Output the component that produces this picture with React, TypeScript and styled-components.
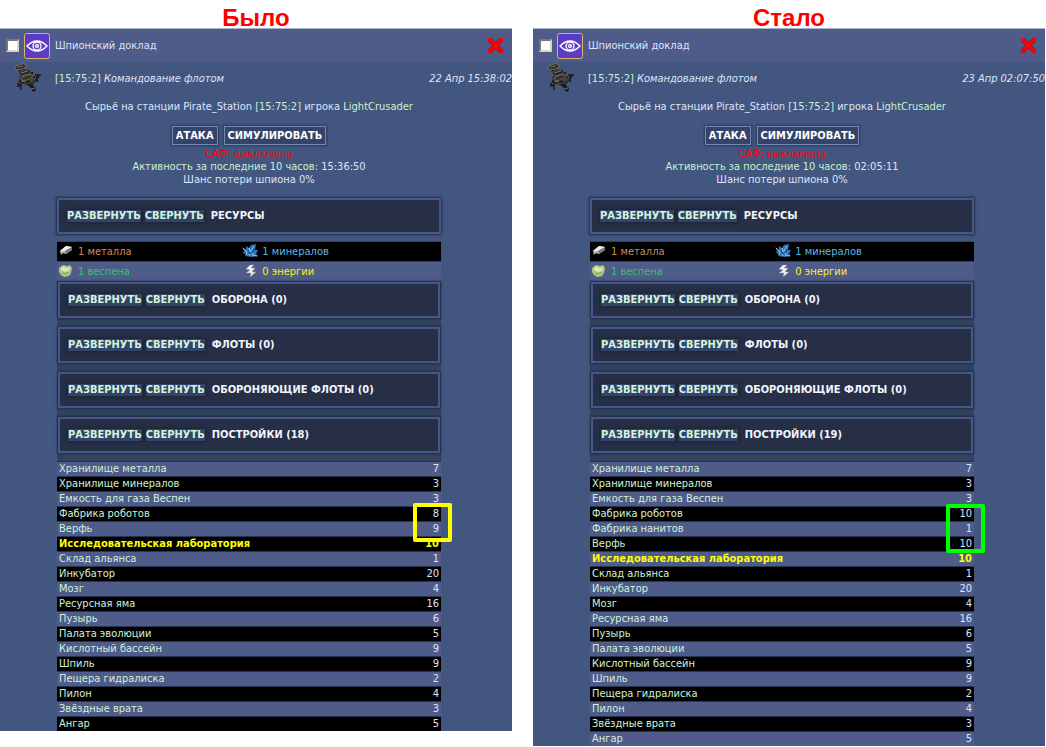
import React from "react";
import styled, { createGlobalStyle, css } from "styled-components";

const GlobalStyle = createGlobalStyle`
  *, *::before, *::after { box-sizing: border-box; }
  body { margin: 0; background: #fff; }
`;

const Page = styled.main`
  display: grid;
  grid-template-columns: 1fr 1fr;
  column-gap: 21px;
  align-items: start;
  padding-right: 1px;
  color: #dde4fb;
  font: 11px/13px "DejaVu Sans Condensed", "DejaVu Sans", sans-serif;
`;

const Column = styled.section`
  min-width: 0;
`;

const Title = styled.h1`
  height: 28px;
  margin: 0;
  padding-top: 4px;
  text-align: center;
  color: #f00;
  font: bold 24px/28px "Liberation Sans", Arial, sans-serif;
`;

const Panel = styled.article`
  background: #43567f;
  border-top: 1px solid #a9b4cc;
`;

const Header = styled.header`
  display: flex;
  align-items: center;
  height: 33px;
  padding: 0 7px 0 6px;
  background: #4f5b88;
`;

const Check = styled.input`
  appearance: none;
  width: 13px;
  height: 13px;
  margin: 0 5px 0 0;
  background: #fff;
  border: 2px solid;
  border-color: #777 #d8d4cc #d8d4cc #777;
`;

const EyeIcon = styled.svg`
  width: 26px;
  height: 26px;
  margin-right: 5px;
`;

const Subject = styled.label`
  flex: 1;
`;

const CloseButton = styled.button`
  width: 19px;
  height: 19px;
  padding: 0;
  border: 0;
  background: none;
  cursor: pointer;
  svg { display: block; }
`;

const Sender = styled.div`
  display: flex;
  align-items: center;
  height: 32px;
  padding-left: 13px;
`;

const ShipIcon = styled.svg`
  width: 30px;
  height: 30px;
  margin-right: 12px;
`;

const Link = styled.a`
  color: #c9f0cf;
  text-decoration: none;
`;

const From = styled.em`
  flex: 1;
  margin-left: 3px;
`;

const Sent = styled.time`
  font-style: italic;
`;

const Content = styled.div`
  padding-right: 14px;
  text-align: center;
`;

const Line = styled.p`
  margin: 0;
`;

const Intro = styled(Line)`
  padding: 6px 0 13px;
`;

const Actions = styled.div`
  display: flex;
  justify-content: center;
  gap: 6px;
  margin-bottom: 2px;
`;

const ActionButton = styled.button`
  height: 19px;
  padding: 0 3px;
  border: 1px solid #7488b4;
  background: #33436a;
  box-shadow: 0 0 2px 1px #2c3a5a;
  color: #fff;
  font: bold 11px/15px "DejaVu Sans Condensed", sans-serif;
  cursor: pointer;
`;

const Status = styled(Line)`
  color: #f00;
`;

const Report = styled.div`
  width: 384px;
  max-width: 100%;
  margin: 12px auto 0;
  text-align: left;
`;

const Group = styled.div`
  display: grid;
  gap: 9px;
  padding: 1px 1px 8px;
  background: #33425f;
`;

const Bar = styled.div`
  display: flex;
  align-items: center;
  height: 36px;
  padding-left: 8px;
  border: 2px solid #43588a;
  background: #262f45;
  box-shadow: 0 0 2px 1px #232d45;
`;

const FirstBar = styled(Bar)`
  margin: 0 0 7px;
`;

const ToggleButton = styled.button`
  height: 12px;
  margin-right: 4px;
  padding: 0;
  border: 0;
  background: #32446a;
  box-shadow: 0 0 3px 1px #1c2438;
  color: #d6f3da;
  font: bold 11px/12px "DejaVu Sans Condensed", sans-serif;
  cursor: pointer;
`;

const BarTitle = styled.h2`
  margin: 0 0 0 3px;
  color: #f2f4ff;
  font: bold 11px/14px "DejaVu Sans Condensed", sans-serif;
`;

const Table = styled.table`
  width: 100%;
  border-collapse: collapse;
`;

const ResourceRow = styled.tr<{ $dark?: boolean }>`
  height: 20px;
  background: ${(p) => (p.$dark ? "#000" : "#4f5b88")};
  box-shadow: inset 0 1px #33425f;
`;

const ResourceCell = styled.td<{ $color: string }>`
  width: 48%;
  padding: 0 0 0 1px;
  color: ${(p) => p.$color};
  & + & { width: 52%; }
`;

const ResourceLabel = styled.span`
  display: flex;
  align-items: center;
  gap: 3px;
  svg { width: 17px; height: 14px; }
`;

const Buildings = styled.div`
  position: relative;
`;

const BuildingRow = styled.tr<{ $hot: boolean }>`
  height: 15px;
  background: #000;
  color: #d2f0da;
  box-shadow: inset 0 1px #28334d;
  &:nth-child(odd) { background: #4f5b88; }
  ${(p) =>
    p.$hot &&
    css`
      &&, && td { color: #ff0; font-weight: bold; }
    `}
`;

const NameCell = styled.td`
  padding: 1px 2px;
`;

const LevelCell = styled.td`
  padding: 1px 2px;
  text-align: right;
  color: #dde4fb;
`;

const Marker = styled.div<{ $color: string; $top: number; $height: number }>`
  position: absolute;
  top: ${(p) => p.$top}px;
  right: -11px;
  width: 39px;
  height: ${(p) => p.$height}px;
  border: 4px solid ${(p) => p.$color};
  border-radius: 2px;
  pointer-events: none;
`;

const Eye = () => (
  <EyeIcon viewBox="0 0 26 26" aria-hidden="true">
    <rect x="0.5" y="0.5" width="25" height="25" rx="2" fill="#5b3cc4" stroke="#d9b56a" />
    <path d="M3 13Q13 3 23 13Q13 23 3 13Z" fill="none" stroke="#fff" strokeWidth="1.4" />
    <circle cx="13" cy="13" r="4" fill="none" stroke="#fff" strokeWidth="1.3" />
    <circle cx="13" cy="13" r="1.8" fill="#c9bff2" stroke="#fff" strokeWidth="0.8" />
  </EyeIcon>
);

const Ship = () => (
  <ShipIcon viewBox="0 0 30 30" aria-hidden="true">
    <path d="M5 6L13 6L15 9L20 9L20 12L27 13L25 16L21 20L18 21L23 25L22 29L19 28L17 23L9 21L6 24L5 20L6 15L8 13L6 10Z" fill="#1d1e20" />
    <ellipse cx="7.500" cy="3.800" rx="5.500" ry="2.600" transform="rotate(-14 7.500 3.800)" fill="#2b2a28" stroke="#706f6a" />
    <ellipse cx="12" cy="9.500" rx="6" ry="2.600" transform="rotate(-15 12 9.500)" fill="#25272a" stroke="#55534c" />
    <ellipse cx="14" cy="16.500" rx="9" ry="4.200" transform="rotate(-18 14 16.500)" fill="#1f2022" stroke="#5a584c" />
    <ellipse cx="14" cy="14.500" rx="6" ry="2.400" transform="rotate(-18 14 14.500)" fill="#34332f" stroke="#85816e" strokeWidth="0.7" />
    <path d="M5 24V20M8 27V21M22 12L28 12M23 16L25 19M15 21L20 26M19 21L21 27" stroke="#1a1a1b" strokeWidth="1.500" />
    <path d="M4 4L10 3M8 10L15 8M8 18L13 19M17 18L21 15M18 26L22 25" stroke="#8d8975" strokeWidth="0.8" />
  </ShipIcon>
);

const Cross = () => (
  <svg width="19" height="19" viewBox="0 0 19 19" aria-hidden="true">
    <path d="M3.500 3.500L15.500 15.500M15.500 3.500L3.500 15.500" stroke="#7a1d3c" strokeWidth="4.600" />
    <path d="M3.500 3.500L15.500 15.500M15.500 3.500L3.500 15.500" stroke="#f00" strokeWidth="3.400" strokeLinecap="round" />
  </svg>
);

const Metal = () => (
  <svg viewBox="0 0 17 14" aria-hidden="true">
    <path d="M2 7L8 2L14 3L14 6L8 10L5 9L3 11Z" fill="#b9b9b9" />
    <path d="M2 7L8 2L14 3L7 7Z" fill="#ededed" />
    <path d="M7 7L14 3L14 6L8 10Z" fill="#777" />
  </svg>
);

const Mineral = () => (
  <svg viewBox="0 0 17 14" aria-hidden="true">
    <path d="M0 3L4 6L4 2L7 4L9 1L14 0L13 6L16 6L14 10L16 12L10 13L3 12L4 10L1 9L2 7Z" fill="#2f74b8" />
    <path d="M1 4L5 8L4 11M7 4L8 8L12 2M12 8L10 11L15 12M7 10L8 12" fill="none" stroke="#8cc6ee" />
    <path d="M6 6L8 10M12 5L11 9" stroke="#153f7c" />
  </svg>
);

const Gas = () => (
  <svg viewBox="0 0 17 14" aria-hidden="true">
    <path d="M1 4L5 1L9 2L12 1L14 4L13 9L11 12L6 13L3 11L1 8Z" fill="#a9c77f" />
    <path d="M3 4L6 2L8 4L12 3L11 7L7 8L3 6Z" fill="#dbe9b4" />
    <path d="M4 9L7 10L11 8" fill="none" stroke="#7fa05c" />
  </svg>
);

const Energy = () => (
  <svg viewBox="0 0 17 14" aria-hidden="true">
    <path d="M8 1L4 5L8 6L4 9L9 9L8 13L14 8L10 8L13 4L9 4L12 1Z" fill="#f3f3ec" stroke="#8d93a8" strokeWidth="0.5" />
  </svg>
);

const Toggles = () => (
  <>
    <ToggleButton type="button">РАЗВЕРНУТЬ</ToggleButton>
    <ToggleButton type="button">СВЕРНУТЬ</ToggleButton>
  </>
);

type Building = [name: string, level: number];

interface ReportData {
  id: string;
  title: string;
  sent: string;
  activity: string;
  marker: { color: string; top: number; height: number };
  buildings: Building[];
}

const reports: ReportData[] = [
  {
    id: "before",
    title: "Было",
    sent: "22 Апр 15:38:02",
    activity: "15:36:50",
    marker: { color: "#ff0", top: 42, height: 39 },
    buildings: [
      ["Хранилище металла", 7],
      ["Хранилище минералов", 3],
      ["Емкость для газа Веспен", 3],
      ["Фабрика роботов", 8],
      ["Верфь", 9],
      ["Исследовательская лаборатория", 10],
      ["Склад альянса", 1],
      ["Инкубатор", 20],
      ["Мозг", 4],
      ["Ресурсная яма", 16],
      ["Пузырь", 6],
      ["Палата эволюции", 5],
      ["Кислотный бассейн", 9],
      ["Шпиль", 9],
      ["Пещера гидралиска", 2],
      ["Пилон", 4],
      ["Звёздные врата", 3],
      ["Ангар", 5],
    ],
  },
  {
    id: "after",
    title: "Стало",
    sent: "23 Апр 02:07:50",
    activity: "02:05:11",
    marker: { color: "#0f0", top: 43, height: 49 },
    buildings: [
      ["Хранилище металла", 7],
      ["Хранилище минералов", 3],
      ["Емкость для газа Веспен", 3],
      ["Фабрика роботов", 10],
      ["Фабрика нанитов", 1],
      ["Верфь", 10],
      ["Исследовательская лаборатория", 10],
      ["Склад альянса", 1],
      ["Инкубатор", 20],
      ["Мозг", 4],
      ["Ресурсная яма", 16],
      ["Пузырь", 6],
      ["Палата эволюции", 5],
      ["Кислотный бассейн", 9],
      ["Шпиль", 9],
      ["Пещера гидралиска", 2],
      ["Пилон", 4],
      ["Звёздные врата", 3],
      ["Ангар", 5],
    ],
  },
];

const SpyReport = ({ report }: { report: ReportData }) => (
  <Column>
    <Title>{report.title}</Title>
    <Panel>
      <Header>
        <Check type="checkbox" id={report.id} />
        <Eye />
        <Subject htmlFor={report.id}>Шпионский доклад</Subject>
        <CloseButton type="button" aria-label="Удалить">
          <Cross />
        </CloseButton>
      </Header>
      <Sender>
        <Ship />
        <Link href="#">[15:75:2]</Link>
        <From>Командование флотом</From>
        <Sent>{report.sent}</Sent>
      </Sender>
      <Content>
        <Intro>
          Сырьё на станции Pirate_Station <Link href="#">[15:75:2]</Link> игрока <Link href="#">LightCrusader</Link>
        </Intro>
        <Actions>
          <ActionButton type="button">АТАКА</ActionButton>
          <ActionButton type="button">СИМУЛИРОВАТЬ</ActionButton>
        </Actions>
        <Status>САФ: выключена</Status>
        <Line>
          <Link href="#">Активность за последние 10 часов:</Link> {report.activity}
        </Line>
        <Line>Шанс потери шпиона 0%</Line>
        <Report>
          <FirstBar>
            <Toggles />
            <BarTitle>РЕСУРСЫ</BarTitle>
          </FirstBar>
          <Table>
            <tbody>
              <ResourceRow $dark>
                <ResourceCell $color="#c98d58">
                  <ResourceLabel><Metal />1 металла</ResourceLabel>
                </ResourceCell>
                <ResourceCell $color="#5bb9e6">
                  <ResourceLabel><Mineral />1 минералов</ResourceLabel>
                </ResourceCell>
              </ResourceRow>
              <ResourceRow>
                <ResourceCell $color="#2fc76a">
                  <ResourceLabel><Gas />1 веспена</ResourceLabel>
                </ResourceCell>
                <ResourceCell $color="#f4f41c">
                  <ResourceLabel><Energy />0 энергии</ResourceLabel>
                </ResourceCell>
              </ResourceRow>
            </tbody>
          </Table>
          <Group>
            {["ОБОРОНА (0)", "ФЛОТЫ (0)", "ОБОРОНЯЮЩИЕ ФЛОТЫ (0)", `ПОСТРОЙКИ (${report.buildings.length})`].map((t) => (
              <Bar key={t}>
                <Toggles />
                <BarTitle>{t}</BarTitle>
              </Bar>
            ))}
          </Group>
          <Buildings>
            <Table>
              <tbody>
                {report.buildings.map(([name, level]) => (
                  <BuildingRow key={name} $hot={name === "Исследовательская лаборатория"}>
                    <NameCell>{name}</NameCell>
                    <LevelCell>{level}</LevelCell>
                  </BuildingRow>
                ))}
              </tbody>
            </Table>
            <Marker $color={report.marker.color} $top={report.marker.top} $height={report.marker.height} />
          </Buildings>
        </Report>
      </Content>
    </Panel>
  </Column>
);

export default function App() {
  return (
    <>
      <GlobalStyle />
      <Page>
        {reports.map((r) => (
          <SpyReport key={r.id} report={r} />
        ))}
      </Page>
    </>
  );
}
